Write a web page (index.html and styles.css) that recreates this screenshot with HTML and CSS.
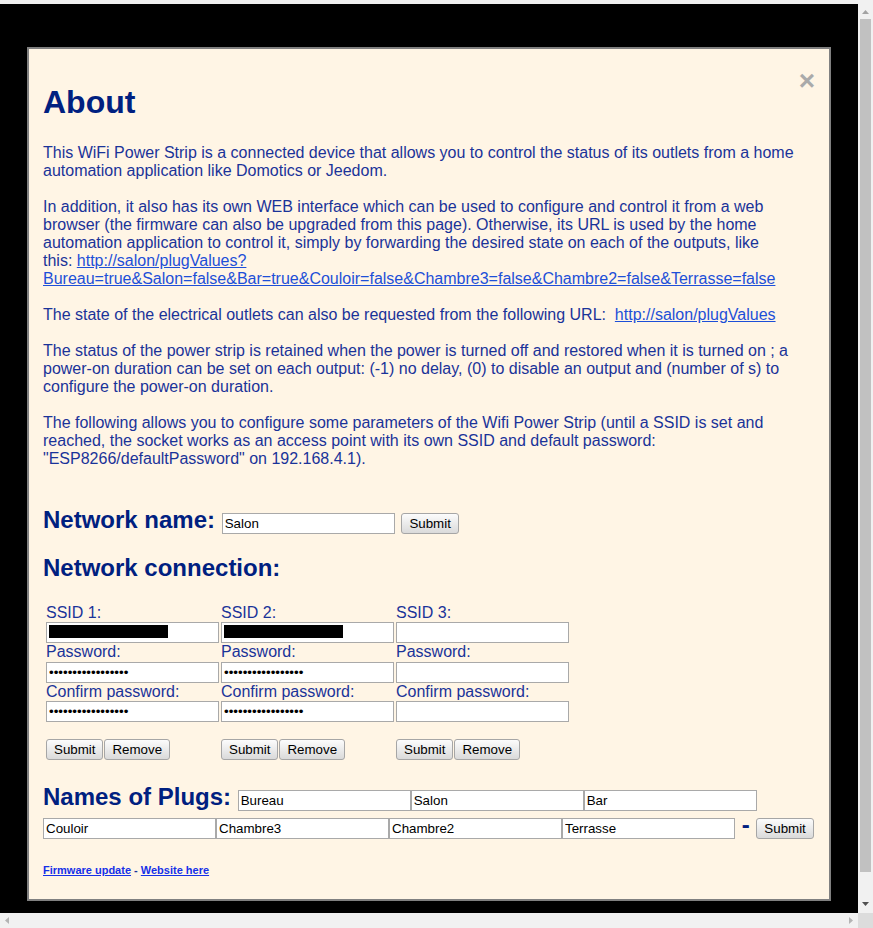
FILE: index.html
```html
<!DOCTYPE html>
<html>
<head>
<meta charset="utf-8">
<title>About</title>
<link rel="stylesheet" href="styles.css">
</head>
<body>
<div class="screen">
  <div class="viewport">
    <div class="modal">
      <span class="close">&times;</span>
      <h1>About</h1>
      <p>This WiFi Power Strip is a connected device that allows you to control the status of its outlets from a home automation application like Domotics or Jeedom.</p>
      <p>In addition, it also has its own WEB interface which can be used to configure and control it from a web browser (the firmware can also be upgraded from this page). Otherwise, its URL is used by the home automation application to control it, simply by forwarding the desired state on each of the outputs, like this:&nbsp;<a class="link" href="#">http://salon/plugValues?Bureau=true&amp;Salon=false&amp;Bar=true&amp;Couloir=false&amp;Chambre3=false&amp;Chambre2=false&amp;Terrasse=false</a></p>
      <p>The state of the electrical outlets can also be requested from the following URL:&nbsp; <a class="link" href="#">http://salon/plugValues</a></p>
      <p>The status of the power strip is retained when the power is turned off and restored when it is turned on ; a power-on duration can be set on each output: (-1) no delay, (0) to disable an output and (number of s) to configure the power-on duration.</p>
      <p>The following allows you to configure some parameters of the Wifi Power Strip (until a SSID is set and reached, the socket works as an access point with its own SSID and default password: "ESP8266/defaultPassword" on 192.168.4.1).</p>

      <h2 class="netname">Network name: <input class="field" type="text" value="Salon"> <button class="btn">Submit</button></h2>

      <h2>Network connection:</h2>
      <div class="ssids">
        <div class="ssid">
          <span class="lbl">SSID 1:</span>
          <input class="field redacted" type="text" value="">
          <span class="lbl">Password:</span>
          <input class="field" type="password" value="xxxxxxxxxxxxxxxxx">
          <span class="lbl">Confirm password:</span>
          <input class="field" type="password" value="xxxxxxxxxxxxxxxxx">
          <div class="btns"><button class="btn">Submit</button><button class="btn">Remove</button></div>
        </div>
        <div class="ssid">
          <span class="lbl">SSID 2:</span>
          <input class="field redacted" type="text" value="">
          <span class="lbl">Password:</span>
          <input class="field" type="password" value="xxxxxxxxxxxxxxxxx">
          <span class="lbl">Confirm password:</span>
          <input class="field" type="password" value="xxxxxxxxxxxxxxxxx">
          <div class="btns"><button class="btn">Submit</button><button class="btn">Remove</button></div>
        </div>
        <div class="ssid">
          <span class="lbl">SSID 3:</span>
          <input class="field" type="text" value="">
          <span class="lbl">Password:</span>
          <input class="field" type="password" value="">
          <span class="lbl">Confirm password:</span>
          <input class="field" type="password" value="">
          <div class="btns"><button class="btn">Submit</button><button class="btn">Remove</button></div>
        </div>
      </div>

      <h2 class="plugs">Names of Plugs: <input class="field" type="text" value="Bureau"><input class="field" type="text" value="Salon"><input class="field" type="text" value="Bar"><br><input class="field" type="text" value="Couloir"><input class="field" type="text" value="Chambre3"><input class="field" type="text" value="Chambre2"><input class="field" type="text" value="Terrasse"> - <button class="btn">Submit</button></h2>

      <p class="footer"><a href="#">Firmware update</a> - <a href="#">Website here</a></p>
    </div>
  </div>
  <div class="vbar">
    <div class="vbtn"><svg width="7" height="4" viewBox="0 0 7 4"><polygon points="0,4 7,4 3.5,0" fill="#a3a3a3"/></svg></div>
    <div class="vthumb"></div>
    <div class="vspace"></div>
    <div class="vbtn down"><svg width="7" height="4" viewBox="0 0 7 4"><polygon points="0,0 7,0 3.5,4" fill="#505050"/></svg></div>
  </div>
  <div class="hbar">
    <svg width="4" height="7" viewBox="0 0 4 7"><polygon points="4,0 4,7 0,3.5" fill="#b4b4b4"/></svg>
    <svg width="4" height="7" viewBox="0 0 4 7"><polygon points="0,0 0,7 4,3.5" fill="#b4b4b4"/></svg>
  </div>
  <div class="corner"></div>
</div>
</body>
</html>
```

FILE: styles.css
```css
* { box-sizing: border-box; }
html, body { margin: 0; padding: 0; }
body {
  font-family: "Liberation Sans", Arial, sans-serif;
  background: #f0f0f0;
  overflow: hidden;
}
.screen {
  display: grid;
  grid-template-columns: 858px 15px;
  grid-template-rows: 913px 15px;
  width: 873px;
  height: 928px;
}
.viewport {
  background: #000;
  border-top: 4px solid #f0f0f0;
  overflow: hidden;
  padding: 43px 0 0 27px;
}
.modal {
  width: 804px;
  background: #fff5e5;
  border: 2px solid #808080;
  padding: 14px 14px 22px 14px;
  color: #1a3399;
  font-size: 16px;
}
.close {
  float: right;
  color: #aaaaaa;
  font-size: 28px;
  font-weight: bold;
  line-height: 32px;
  padding-top: 2px;
}
h1 {
  font-size: 32px;
  margin: 21px 0 23px;
  color: #002080;
}
h2 {
  font-size: 24px;
  margin: 20px 0;
  color: #002080;
}
p {
  margin: 18px 0;
  line-height: 18px;
}
.link { color: #1d4fd8; }
.netname { margin-top: 38px; }
.field {
  font-family: "Liberation Sans", Arial, sans-serif;
  font-size: 13.33px;
  font-weight: normal;
  color: #000;
  width: 173px;
  height: 21px;
  margin: 0;
  padding: 1px 2px;
  border: 1px solid #a9a9a9;
  background: #fff;
  vertical-align: baseline;
}
.redacted {
  background: linear-gradient(#000, #000) 2px 2px / 119px 13px no-repeat, #fff;
}
.btn {
  font-family: "Liberation Sans", Arial, sans-serif;
  font-size: 13.33px;
  font-weight: normal;
  color: #000;
  height: 21px;
  margin: 0;
  padding: 0 7px;
  border: 1px solid #a6a6a6;
  border-radius: 3px;
  background: linear-gradient(#fcfcfc, #dadada);
  vertical-align: baseline;
}
.ssids {
  display: flex;
  gap: 2px;
  padding: 2px 0 3px 3px;
}
.ssid {
  display: flex;
  flex-direction: column;
  width: 173px;
}
.lbl {
  display: block;
  font-size: 16px;
  line-height: 18.4px;
}
.ssid .field { display: block; }
.btns {
  display: flex;
  gap: 1px;
  margin-top: 17px;
}
.plugs { margin-top: 20px; }
.footer {
  font-size: 11px;
  font-weight: bold;
  line-height: 13px;
  margin: 25px 0 0;
}
.footer a { color: #1530e8; }

.vbar {
  background: #f1f1f1;
  display: flex;
  flex-direction: column;
  align-items: center;
}
.vbtn {
  height: 17px;
  width: 15px;
  display: flex;
  align-items: center;
  justify-content: center;
  padding-top: 6px;
}
.vbtn.down { padding-top: 0; padding-bottom: 2px; }
.vthumb {
  width: 11px;
  height: 853px;
  margin-top: 2px;
  background: #c1c1c1;
}
.vspace { flex: 1; }
.hbar {
  background: #f1f1f1;
  display: flex;
  align-items: center;
  justify-content: space-between;
  padding: 0 5px;
}
.corner { background: #dcdcdc; }
```
